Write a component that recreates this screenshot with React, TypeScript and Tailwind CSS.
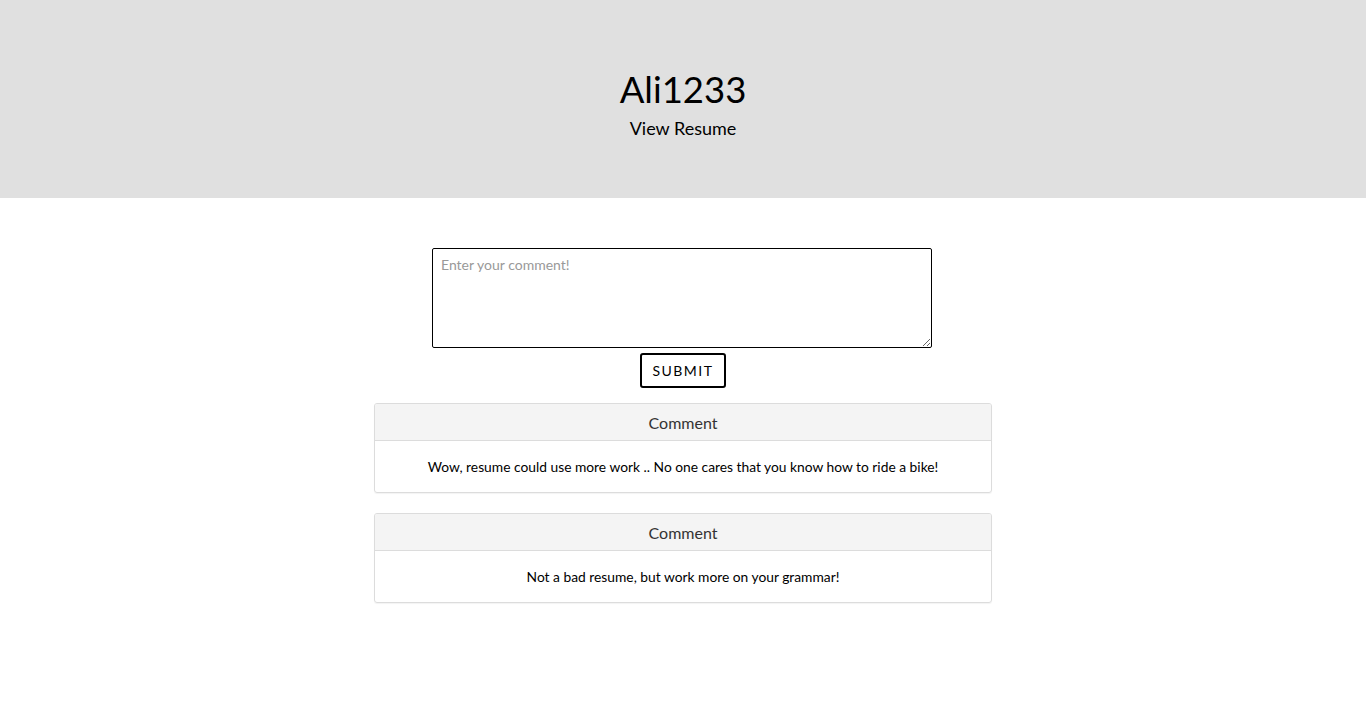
import React from "react";

const comments = [
  "Wow, resume could use more work .. No one cares that you know how to ride a bike!",
  "Not a bad resume, but work more on your grammar!",
];

export default function App() {
  return (
    <div className="min-h-[705px] bg-white text-black" style={{ fontFamily: "Lato, 'Open Sans', sans-serif" }}>
      <header className="h-[198px] bg-[#e0e0e0] flex flex-col items-center pt-[67px]">
        <h1 className="text-[36.5px] leading-[44px] text-black">Ali1233</h1>
        <a className="text-[18px] leading-[22px] mt-[6px] text-black">View Resume</a>
      </header>
      <main className="flex flex-col items-center pt-[50px]">
        <div className="w-[500px] -translate-x-px">
          <textarea
            placeholder="Enter your comment!"
            className="block w-[500px] h-[100px] border border-black rounded-[2px] px-[8px] pt-[5px] text-[14px] placeholder:text-[#999] outline-none"
          />
        </div>
        <button className="mt-[5px] w-[86px] h-[35px] border-2 border-black rounded-[3px] text-[14px] tracking-[1.5px] text-black">
          SUBMIT
        </button>
        <div className="flex flex-col gap-[20px] mt-[15px]">
          {comments.map((c, i) => (
            <div key={i} className="w-[618px] border border-[#dcdcdc] rounded-[3px] shadow-[0_1px_1px_rgba(0,0,0,0.05)] overflow-hidden">
              <div className="h-[37px] pt-[2px] bg-[#f4f4f4] border-b border-[#dcdcdc] flex items-center justify-center text-[16px] text-[#333]">
                Comment
              </div>
              <div className="h-[51px] pt-[2px] flex items-center justify-center text-[13.8px] text-black">
                {c}
              </div>
            </div>
          ))}
        </div>
      </main>
    </div>
  );
}
